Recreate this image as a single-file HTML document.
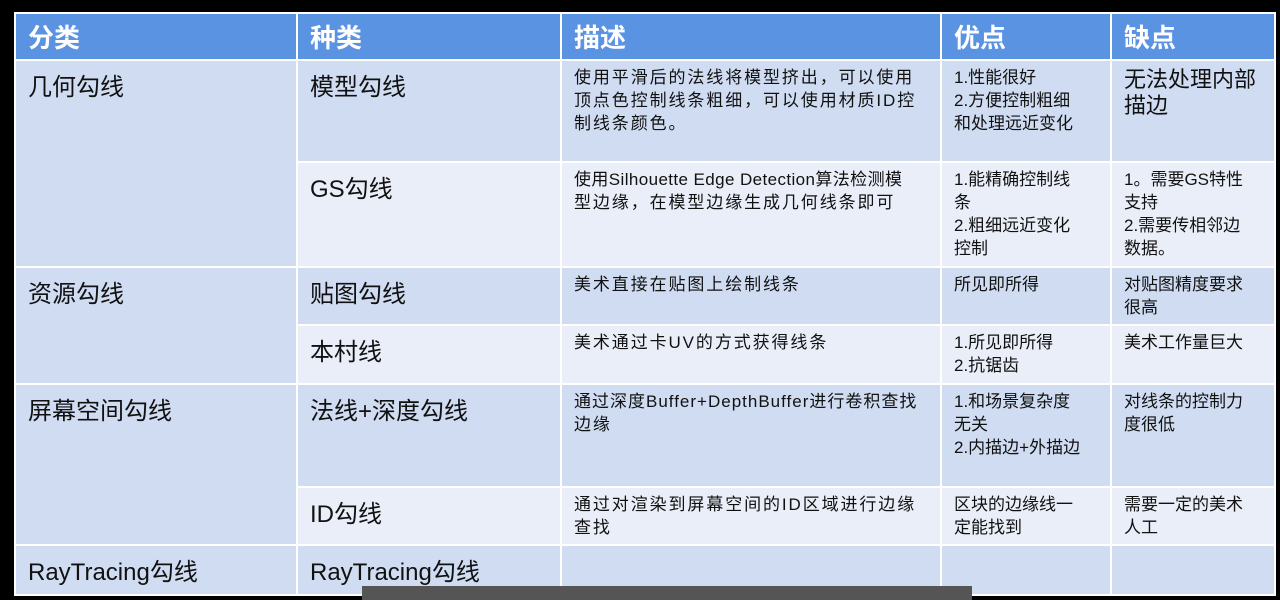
<!DOCTYPE html>
<html><head><meta charset="utf-8"><style>
html,body{margin:0;padding:0;background:#000;width:1280px;height:596px;overflow:hidden}
table{position:absolute;left:14px;top:12px;border-collapse:collapse;table-layout:fixed;font-family:"Liberation Sans","Noto Sans CJK SC",sans-serif;color:#111}
td,th{border:2px solid #fff;vertical-align:top;padding:0 20px 0 12px;text-align:left;box-sizing:border-box}
th{background:#5b93e3;color:#fff;font-size:26px;font-weight:bold;height:47px;vertical-align:middle}
td{background:#cfdcf2}
tr.l td{background:#e9eef8}
td.a{background:#cfdcf2 !important}
.big{font-size:24px;padding-top:6px}
.sm{font-size:17px;line-height:23px;padding-top:5px}
.d{padding-right:4px;letter-spacing:1.9px;white-space:nowrap;overflow:hidden}
.n{padding-right:26px}
.sub{position:absolute;left:362px;top:586px;width:610px;height:14px;background:#555}
</style></head><body>
<table>
<colgroup><col style="width:282px"><col style="width:264px"><col style="width:380px"><col style="width:170px"><col style="width:164px"></colgroup>
<tr><th>分类</th><th>种类</th><th>描述</th><th>优点</th><th>缺点</th></tr>
<tr style="height:102px"><td class="a big" rowspan="2">几何勾线</td><td class="big">模型勾线</td><td class="sm d">使用平滑后的法线将模型挤出，可以使用<br>顶点色控制线条粗细，可以使用材质ID控<br>制线条颜色。</td><td class="sm n">1.性能很好<br>2.方便控制粗细和处理远近变化</td><td class="big" style="font-size:22px;line-height:26px;padding-right:10px">无法处理内部描边</td></tr>
<tr class="l" style="height:105px"><td class="big">GS勾线</td><td class="sm d"><span style="letter-spacing:0.4px">使用Silhouette Edge Detection算法检测模</span><br>型边缘，在模型边缘生成几何线条即可</td><td class="sm n">1.能精确控制线条<br>2.粗细远近变化控制</td><td class="sm n">1。需要GS特性支持<br>2.需要传相邻边数据。</td></tr>
<tr style="height:58px"><td class="a big" rowspan="2">资源勾线</td><td class="big">贴图勾线</td><td class="sm d">美术直接在贴图上绘制线条</td><td class="sm n">所见即所得</td><td class="sm n">对贴图精度要求很高</td></tr>
<tr class="l" style="height:59px"><td class="big">本村线</td><td class="sm d">美术通过卡UV的方式获得线条</td><td class="sm n">1.所见即所得<br>2.抗锯齿</td><td class="sm n">美术工作量巨大</td></tr>
<tr style="height:103px"><td class="a big" rowspan="2">屏幕空间勾线</td><td class="big">法线+深度勾线</td><td class="sm d"><span style="letter-spacing:1px">通过深度Buffer+DepthBuffer进行卷积查找</span><br>边缘</td><td class="sm n">1.和场景复杂度无关<br>2.内描边+外描边</td><td class="sm n">对线条的控制力度很低</td></tr>
<tr class="l" style="height:58px"><td class="big">ID勾线</td><td class="sm d">通过对渲染到屏幕空间的ID区域进行边缘<br>查找</td><td class="sm n">区块的边缘线一定能找到</td><td class="sm n">需要一定的美术人工</td></tr>
<tr style="height:50px"><td class="big">RayTracing勾线</td><td class="big">RayTracing勾线</td><td></td><td></td><td></td></tr>
</table>
<div class="sub"></div>
</body></html>
